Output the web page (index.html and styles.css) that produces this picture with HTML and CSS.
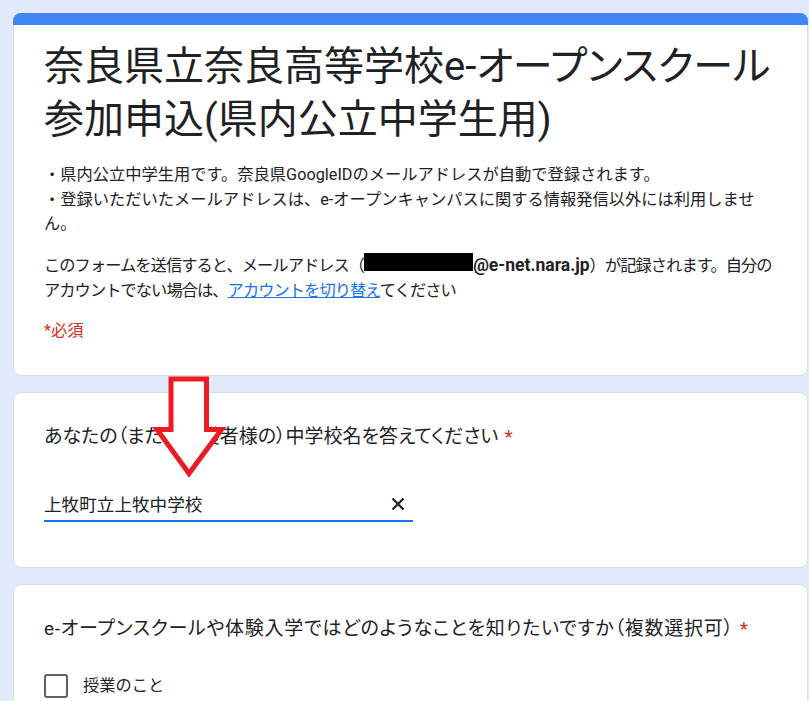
FILE: index.html
```html
<!DOCTYPE html>
<html lang="ja">
<head>
<meta charset="utf-8">
<title>奈良県立奈良高等学校e-オープンスクール参加申込(県内公立中学生用)</title>
<link rel="stylesheet" href="styles.css">
</head>
<body>
<div class="page">
  <section class="card card--header">
    <div class="card-bar"></div>
    <div class="header-body">
      <h1 class="form-title">奈良県立奈良高等学校e-オープンスクール参加申込(県内公立中学生用)</h1>
      <p class="form-desc">・県内公立中学生用です。奈良県GoogleIDのメールアドレスが自動で登録されます。<br>・登録いただいたメールアドレスは、e-オープンキャンパスに関する情報発信以外には利用しません。</p>
      <p class="notice">このフォームを送信すると、メールアドレス（<span class="redact"></span><b class="email">@e-net.nara.jp</b>）が記録されます。自分のアカウントでない場合は、<a href="#" class="link">アカウントを切り替え</a>てください</p>
      <p class="required-note">*必須</p>
    </div>
  </section>

  <section class="card">
    <div class="question">あなたの（または保護者様の）中学校名を答えてください<span class="asterisk">*</span></div>
    <div class="text-input">
      <span class="input-value">上牧町立上牧中学校</span>
      <svg class="clear-icon" width="14" height="14" viewBox="0 0 14 14" aria-hidden="true">
        <path d="M1.5 1.5 L12.5 12.5 M12.5 1.5 L1.5 12.5" stroke="#202124" stroke-width="2.2" fill="none"/>
      </svg>
    </div>
  </section>

  <section class="card">
    <div class="question question--loose">e-オープンスクールや体験入学ではどのようなことを知りたいですか（複数選択可）<span class="asterisk">*</span></div>
    <div class="options">
      <div class="option"><span class="checkbox"></span><span class="option-label">授業のこと</span></div>
    </div>
  </section>
</div>

<svg class="annotation-arrow" width="80" height="108" viewBox="0 0 80 108" aria-hidden="true">
  <polygon points="21,5 56.5,5 56.5,55.5 71.5,55.5 39,99.5 7,55.5 21,55.5" fill="#ffffff" stroke="#ed1c24" stroke-width="5" stroke-linejoin="miter"/>
</svg>
</body>
</html>
```

FILE: styles.css
```css
html, body {
  margin: 0;
  padding: 0;
}

body {
  background: rgb(224, 234, 251);
  font-family: Roboto, "Noto Sans CJK JP", sans-serif;
  color: #202124;
  min-height: 701px;
}

.page {
  padding: 13px 0 0 13px;
  display: flex;
  flex-direction: column;
  gap: 16px;
}

.card {
  width: 795px;
  box-sizing: border-box;
  background: #ffffff;
  border: 1px solid #dadce0;
  border-radius: 8px;
  padding: 29px 30px 45px;
}

.card--header {
  padding: 0;
}

.card-bar {
  height: 12px;
  margin: -1px -1px 0;
  background: #4285f4;
  border-radius: 8px 8px 0 0;
}

.header-body {
  padding: 15px 30px 31px;
}

.form-title {
  margin: 0;
  font-size: 40px;
  font-weight: 400;
  line-height: 53px;
  font-feature-settings: "palt";
}

.form-desc {
  margin: 17px 0 0;
  font-size: 16.25px;
  line-height: 24.5px;
}

.notice {
  margin: 16.5px 0 0;
  font-size: 16.25px;
  line-height: 24.5px;
  letter-spacing: -0.95px;
}

.redact {
  display: inline-block;
  width: 109px;
  height: 18px;
  background: #000000;
  vertical-align: top;
}

.email {
  font-weight: 700;
  font-size: 17.5px;
  letter-spacing: 0;
}

.link {
  color: #1a73e8;
  text-decoration: underline;
}

.required-note {
  margin: 16px 0 0;
  font-size: 16.25px;
  line-height: 24.5px;
  color: #d93025;
}

.question {
  font-size: 19px;
  line-height: 30px;
  font-feature-settings: "palt";
}

.question--loose {
  letter-spacing: 0.75px;
}

.asterisk {
  color: #d93025;
  margin-left: 6px;
  letter-spacing: 0;
}

.text-input {
  margin-top: 36px;
  width: 369px;
  height: 32px;
  display: flex;
  align-items: center;
  justify-content: space-between;
  border-bottom: 2px solid #1a73e8;
}

.input-value {
  font-size: 17.6px;
}

.clear-icon {
  margin-right: 8px;
}

.options {
  margin-top: 30px;
  display: flex;
  flex-direction: column;
  gap: 16px;
}

.option {
  display: flex;
  align-items: center;
  gap: 15px;
}

.checkbox {
  width: 24px;
  height: 24px;
  box-sizing: border-box;
  border: 2px solid #5f6368;
  border-radius: 3px;
}

.option-label {
  font-size: 16.25px;
  line-height: 24px;
}

.annotation-arrow {
  position: absolute;
  left: 150px;
  top: 374px;
}
```
